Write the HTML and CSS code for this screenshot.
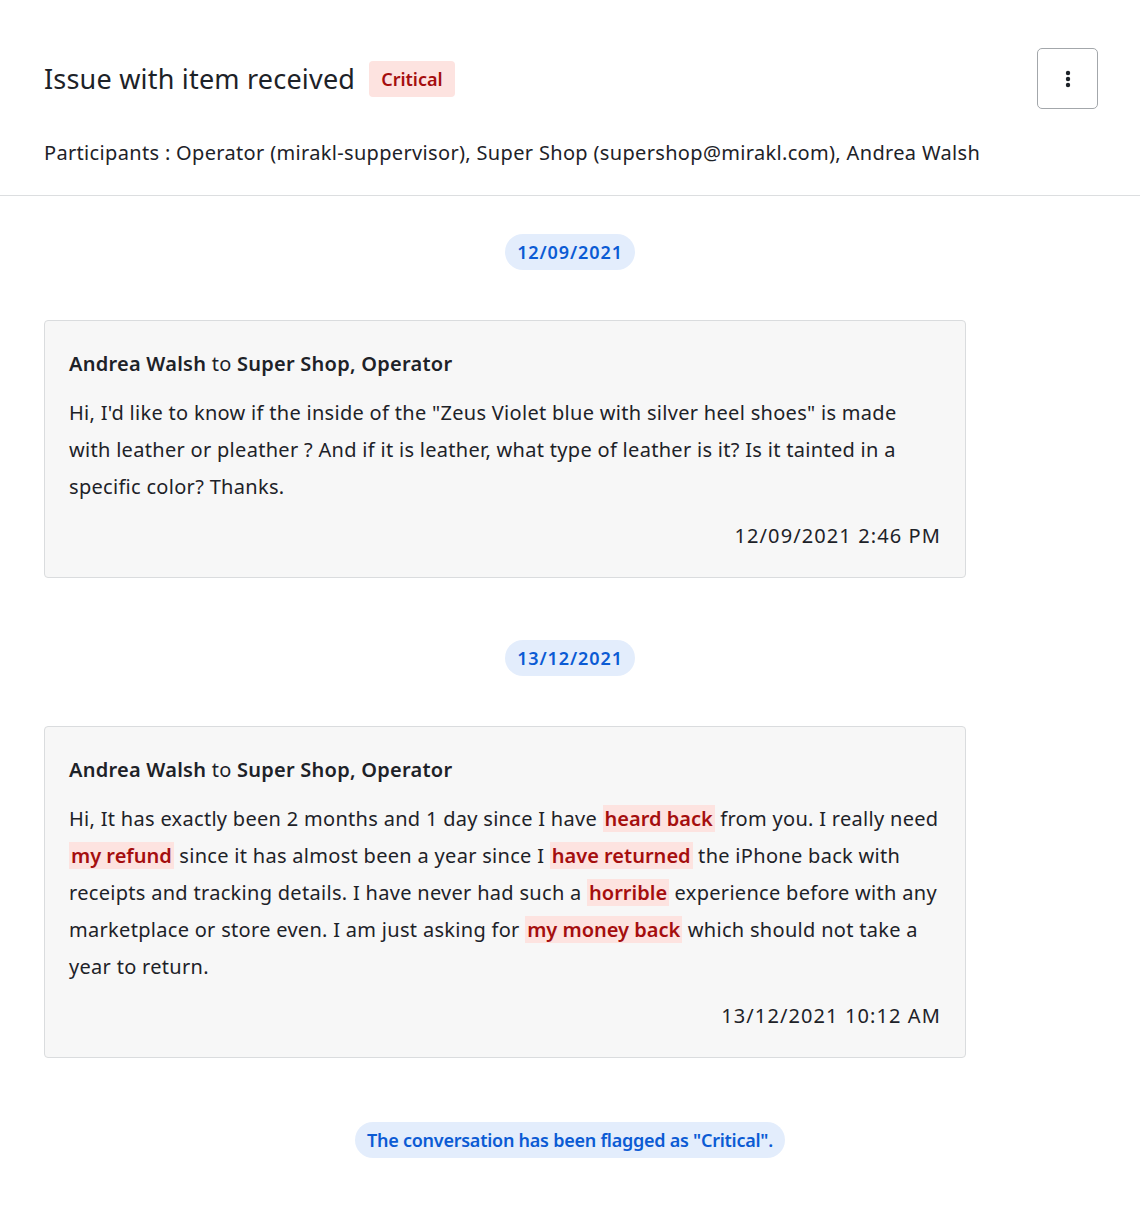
FILE: index.html
```html
<!DOCTYPE html>
<html lang="en">
<head>
    <meta charset="UTF-8">
    <meta name="viewport" content="width=device-width, initial-scale=1.0">
    <title>Issue with item received</title>
    <link rel="stylesheet" href="styles.css">
</head>
<body>
    <div class="conv-header">
        <div class="conv-title-row">
            <h1 class="conv-title">Issue with item received</h1>
            <span class="conv-badge">Critical</span>
            <button class="conv-menu" title="More actions">
                <svg width="6" height="18" viewBox="0 0 6 18">
                    <circle cx="3" cy="3" r="2.2" fill="#1d2228"/>
                    <circle cx="3" cy="9" r="2.2" fill="#1d2228"/>
                    <circle cx="3" cy="15" r="2.2" fill="#1d2228"/>
                </svg>
            </button>
        </div>
        <div class="conv-participants">Participants : Operator (mirakl-suppervisor), Super Shop (supershop@mirakl.com), Andrea Walsh</div>
    </div>

    <div class="conv-thread">
        <div class="conv-date">12/09/2021</div>

        <div class="conv-msg">
            <div class="conv-msg-head"><b>Andrea Walsh</b> to <b>Super Shop, Operator</b></div>
            <div class="conv-msg-body">Hi, I'd like to know if the inside of the "Zeus Violet blue with silver heel shoes" is made with leather or pleather ? And if it is leather, what type of leather is it? Is it tainted in a specific color? Thanks.</div>
            <div class="conv-msg-time">12/09/2021 2:46 PM</div>
        </div>

        <div class="conv-date conv-date-gap">13/12/2021</div>

        <div class="conv-msg">
            <div class="conv-msg-head"><b>Andrea Walsh</b> to <b>Super Shop, Operator</b></div>
            <div class="conv-msg-body">Hi, It has exactly been 2 months and 1 day since I have <mark>heard back</mark> from you. I really need <mark>my refund</mark> since it has almost been a year since I <mark>have returned</mark> the iPhone back with receipts and tracking details. I have never had such a <mark>horrible</mark> experience before with any marketplace or store even. I am just asking for <mark>my money back</mark> which should not take a year to return.</div>
            <div class="conv-msg-time">13/12/2021 10:12 AM</div>
        </div>

        <div class="conv-flag">The conversation has been flagged as "Critical".</div>
    </div>
</body>
</html>
```

FILE: styles.css
```css
body {
    margin: 0;
    font-family: "Noto Sans", "Open Sans", sans-serif;
    color: #1d2228;
    background: #fff;
}

.conv-header {
    padding: 48px 42px 28px 44px;
    border-bottom: 1px solid #dcdee0;
}

.conv-title-row {
    display: flex;
    align-items: center;
    height: 61px;
}

.conv-title {
    margin: 0;
    font-size: 27px;
    font-weight: 400;
    line-height: 36px;
    letter-spacing: 0.2px;
}

.conv-badge {
    margin-left: 14px;
    padding: 0 12px;
    height: 36px;
    line-height: 36px;
    border-radius: 4px;
    background: #fde3e0;
    color: #a50e0e;
    font-size: 18px;
    font-weight: 600;
}

.conv-menu {
    margin-left: auto;
    width: 61px;
    height: 61px;
    display: flex;
    align-items: center;
    justify-content: center;
    background: #fff;
    border: 1.5px solid #a3a7ab;
    border-radius: 5px;
    cursor: pointer;
}

.conv-participants {
    margin-top: 30px;
    font-size: 20px;
    line-height: 28px;
    letter-spacing: 0.33px;
}

.conv-thread {
    display: flex;
    flex-direction: column;
    align-items: flex-start;
    padding: 38px 44px 60px;
}

.conv-date,
.conv-flag {
    align-self: center;
    height: 36px;
    line-height: 36px;
    padding: 0 12px;
    border-radius: 18px;
    background: #e3edfc;
    color: #0b5bd4;
    font-size: 18px;
    font-weight: 600;
}

.conv-date {
    letter-spacing: 0.9px;
}

.conv-date-gap {
    margin-top: 62px;
}

.conv-msg {
    box-sizing: border-box;
    width: 922px;
    margin-top: 50px;
    padding: 24px 24px 23px;
    background: #f7f7f7;
    border: 1px solid #dadcde;
    border-radius: 4px;
    font-size: 20px;
    line-height: 37px;
}

.conv-msg-head {
    letter-spacing: 0.25px;
}

    .conv-msg-head b {
        font-weight: 600;
    }

.conv-msg-body {
    margin-top: 12px;
    letter-spacing: 0.3px;
}

    .conv-msg-body mark {
        background: #fde3e0;
        color: #a50e0e;
        font-weight: 600;
        padding: 0 2px;
        letter-spacing: 0;
    }

.conv-msg-time {
    margin-top: 12px;
    text-align: right;
    letter-spacing: 1.1px;
}

.conv-flag {
    margin-top: 64px;
    letter-spacing: -0.25px;
}
```
